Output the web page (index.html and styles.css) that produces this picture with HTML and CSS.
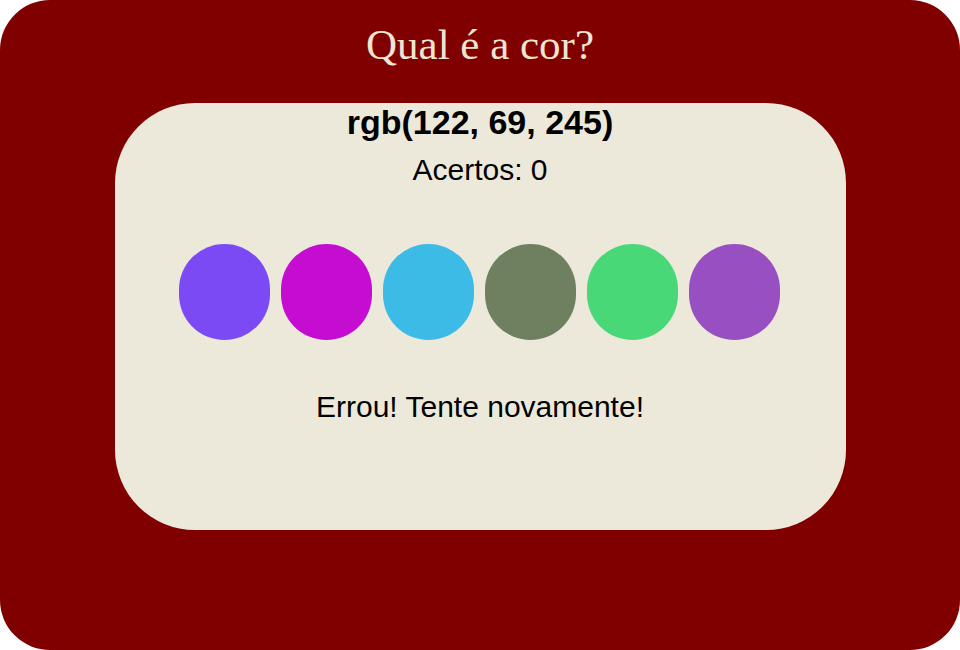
FILE: index.html
```html
<!DOCTYPE html>
<html lang="pt">
<head>
<meta charset="utf-8">
<title>Qual é a cor?</title>
<link rel="stylesheet" href="styles.css">
</head>
<body>
<div class="game">
  <h1 class="title">Qual é a cor?</h1>
  <div class="card">
    <p class="rgb">rgb(122, 69, 245)</p>
    <p class="score">Acertos: 0</p>
    <div class="balls">
      <div class="ball" style="background:#7b4af5"></div>
      <div class="ball" style="background:#c40dd0"></div>
      <div class="ball" style="background:#3bbbe5"></div>
      <div class="ball" style="background:#6f8061"></div>
      <div class="ball" style="background:#48d877"></div>
      <div class="ball" style="background:#984fc2"></div>
    </div>
    <p class="answer">Errou! Tente novamente!</p>
  </div>
</div>
</body>
</html>
```
FILE: styles.css
```css
html, body {
  margin: 0;
  padding: 0;
  background: #ffffff;
}
.game {
  width: 960px;
  height: 650px;
  background: #800000;
  border-radius: 50px;
  display: flex;
  flex-direction: column;
  align-items: center;
  box-sizing: border-box;
  padding-top: 22px;
}
.title {
  margin: 0;
  font-family: "Liberation Serif", serif;
  font-weight: normal;
  font-size: 43px;
  line-height: 46px;
  color: #efe6d2;
}
.card {
  margin-top: 35px;
  width: 731px;
  height: 427px;
  background: #ece9db;
  border-radius: 80px;
  display: flex;
  flex-direction: column;
  align-items: center;
  font-family: "Liberation Sans", Arial, sans-serif;
  color: #000;
}
.rgb {
  margin: 0;
  font-size: 34px;
  font-weight: bold;
  line-height: 38px;
}
.score {
  margin: 12px 0 0;
  font-size: 30px;
  line-height: 34px;
}
.balls {
  margin-top: 57px;
  display: flex;
  gap: 11px;
  margin-left: -2px;
}
.ball {
  width: 91px;
  height: 96px;
  border-radius: 50px;
}
.answer {
  margin: 50px 0 0;
  font-size: 30px;
  line-height: 34px;
}
```
